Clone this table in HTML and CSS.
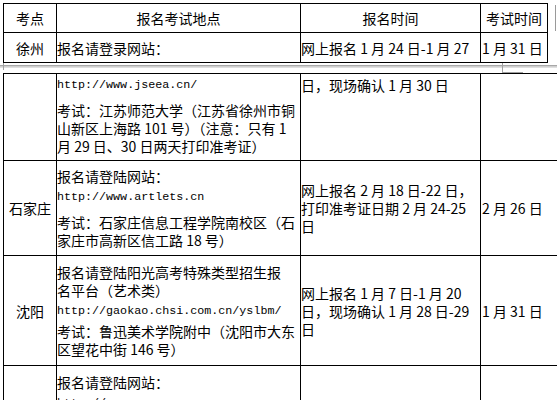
FILE: index.html
```html
<!DOCTYPE html>
<html lang="zh-CN">
<head>
<meta charset="utf-8">
<title>考点安排</title>
<link rel="stylesheet" href="styles.css">
</head>
<body>
<div class="viewport">
  <div class="page page-top">
    <div class="grid grid-top">
      <div class="cell center">考点</div>
      <div class="cell center">报名考试地点</div>
      <div class="cell center">报名时间</div>
      <div class="cell center">考试时间</div>

      <div class="cell center">徐州</div>
      <div class="cell mid">报名请登录网站：</div>
      <div class="cell mid">网上报名 1 月 24 日-1 月 27</div>
      <div class="cell mid last">1 月 31 日</div>
    </div>
    <span class="row-end-mark"></span>
  </div>

  <div class="page-break">
    <span class="margin-mark"></span>
    <span class="corner-mark"></span>
  </div>

  <div class="page page-bottom">
    <div class="grid grid-bottom">
      <div class="cell"></div>
      <div class="cell top">
        <div class="url">http://www.jseea.cn/</div>
        <div class="para gap-lg">考试：江苏师范大学（江苏省徐州市铜<br>山新区上海路 101 号）（注意：只有 1<br>月 29 日、30 日两天打印准考证）</div>
      </div>
      <div class="cell top">日，现场确认 1 月 30 日</div>
      <div class="cell"></div>

      <div class="cell center">石家庄</div>
      <div class="cell mid">
        <div class="para">报名请登陆网站：</div>
        <div class="url gap-sm">http://www.artlets.cn</div>
        <div class="para gap-lg">考试：石家庄信息工程学院南校区（石<br>家庄市高新区信工路 18 号）</div>
      </div>
      <div class="cell mid">网上报名 2 月 18 日-22 日，<br>打印准考证日期 2 月 24-25<br>日</div>
      <div class="cell mid last">2 月 26 日</div>

      <div class="cell center">沈阳</div>
      <div class="cell mid">
        <div class="para">报名请登陆阳光高考特殊类型招生报<br>名平台（艺术类）</div>
        <div class="url gap-sm">http://gaokao.chsi.com.cn/yslbm/</div>
        <div class="para gap-xs">考试：鲁迅美术学院附中（沈阳市大东<br>区望花中街 146 号）</div>
      </div>
      <div class="cell mid">网上报名 1 月 7 日-1 月 20<br>日，现场确认 1 月 28 日-29<br>日</div>
      <div class="cell mid last">1 月 31 日</div>

      <div class="cell"></div>
      <div class="cell top-lg">
        <div class="para">报名请登陆网站：</div>
        <div class="url gap-sm">http://</div>
      </div>
      <div class="cell"></div>
      <div class="cell"></div>
    </div>
  </div>
</div>
</body>
</html>
```

FILE: styles.css
```css
html, body {
  margin: 0;
  padding: 0;
  background: #ffffff;
}

.viewport {
  position: relative;
  width: 557px;
  height: 400px;
  overflow: hidden;
  font-family: "Noto Sans CJK SC", "Noto Sans", sans-serif;
  font-size: 14px;
  line-height: 18px;
  color: #000;
}

.page {
  position: relative;
  padding-left: 3px;
}

.page-top {
  padding-top: 3px;
}

.grid {
  display: grid;
  gap: 1px;
  padding: 1px;
  background: #000;
}

.grid-top {
  width: 543px;
  grid-template-columns: 52px 243px 179px 66px;
  grid-template-rows: 28px 29px;
}

.grid-bottom {
  width: 600px;
  grid-template-columns: 52px 243px 179px 120px;
  grid-template-rows: 86px 94px 109px 80px;
}

.cell {
  background: #fff;
  white-space: nowrap;
  min-width: 0;
}

.center {
  display: flex;
  align-items: center;
  justify-content: center;
}

.mid {
  display: flex;
  flex-direction: column;
  justify-content: center;
}

.top {
  padding-top: 2px;
}

.top-lg {
  padding-top: 7px;
}

.last {
  padding-left: 1px;
}

.url {
  font-family: "Liberation Mono", "DejaVu Sans Mono", monospace;
  font-size: 11.7px;
  line-height: 18px;
}

.gap-lg {
  margin-top: 7px;
}

.gap-sm {
  margin-top: 3px;
}

.gap-xs {
  margin-top: 2px;
}

.row-end-mark {
  position: absolute;
  left: 555px;
  top: 5px;
  width: 1px;
  height: 26px;
  background: #9a9a9a;
}

.page-break {
  position: relative;
  height: 10px;
  padding-top: 2px;
  box-sizing: border-box;
}

.page-break::before {
  content: "";
  display: block;
  height: 1px;
  border-top: 1px solid #a8a8a8;
  border-bottom: 1px solid #e0e0e0;
  background: #cfcfcf;
}

.margin-mark {
  position: absolute;
  left: 0;
  top: 0;
  width: 3px;
  height: 7px;
  border-right: 1px solid #a0a0a0;
}

.corner-mark {
  position: absolute;
  left: 502px;
  top: 0;
  width: 20px;
  height: 9px;
  border-left: 1px solid #a0a0a0;
  border-bottom: 1px solid #a0a0a0;
}
```
